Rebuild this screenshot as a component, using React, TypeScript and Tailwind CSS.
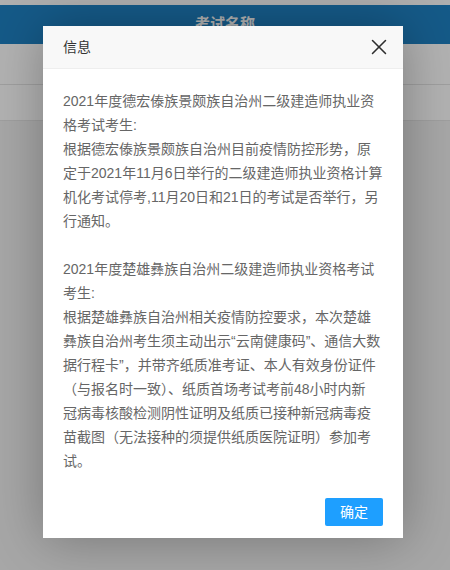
import { X } from "lucide-react";

const font = {
  fontFamily: '"Liberation Sans", "Noto Sans CJK SC", sans-serif',
};

// line breaks follow the original dialog (its font wraps a little differently)
const notices: string[][] = [
  [
    "2021年度德宏傣族景颇族自治州二级建造师执业资",
    "格考试考生:",
    "根据德宏傣族景颇族自治州目前疫情防控形势，原",
    "定于2021年11月6日举行的二级建造师执业资格计算",
    "机化考试停考,11月20日和21日的考试是否举行，另",
    "行通知。",
  ],
  [
    "2021年度楚雄彝族自治州二级建造师执业资格考试",
    "考生:",
    "根据楚雄彝族自治州相关疫情防控要求，本次楚雄",
    "彝族自治州考生须主动出示“云南健康码”、通信大数",
    "据行程卡”，并带齐纸质准考证、本人有效身份证件",
    "（与报名时一致）、纸质首场考试考前48小时内新",
    "冠病毒核酸检测阴性证明及纸质已接种新冠病毒疫",
    "苗截图（无法接种的须提供纸质医院证明）参加考",
    "试。",
  ],
];

function Page() {
  // the exam list behind the modal
  return (
    <div className="min-h-[570px] bg-[#f0f0f0]">
      <div className="h-[5px] bg-[#fbfbfb]" />
      <div className="flex h-[39px] items-center justify-center bg-[#1f82c3] text-[15px] font-bold text-white">
        考试名称
      </div>
      <div className="h-[41px] border-b border-[#e4e4e4] bg-white" />
      <div className="h-[36px] border-b border-[#e4e4e4] bg-white" />
    </div>
  );
}

function InfoDialog() {
  return (
    <div className="absolute left-[43px] top-[26px] w-[360px] bg-white shadow-[1px_1px_50px_rgba(0,0,0,0.3)]">
      <div className="relative h-[43px] border-b border-[#eeeeee] bg-[#f8f8f8] pl-5 pr-20 text-sm leading-[42px] text-[#333]">
        信息
        <button
          type="button"
          className="absolute right-[11px] top-[8px] flex h-[26px] w-[26px] items-center justify-center text-[#2e2e2e]"
        >
          <X size={26} strokeWidth={1.4} />
        </button>
      </div>
      <div className="p-5 text-sm leading-6 text-[#666]">
        {notices.map((lines, i) => (
          <div key={i}>
            {i > 0 && <br />}
            {lines.map((l) => (
              <div key={l} className="whitespace-nowrap">
                {l}
              </div>
            ))}
          </div>
        ))}
      </div>
      <div className="flex justify-end px-[15px] pb-3">
        <button
          type="button"
          className="mx-[5px] mt-[5px] h-7 rounded-[2px] bg-[#1e9fff] px-[15px] text-sm leading-7 text-white"
        >
          确定
        </button>
      </div>
    </div>
  );
}

export default function App() {
  return (
    <div className="relative h-[570px] w-[450px] overflow-hidden" style={font}>
      <Page />
      <div className="absolute inset-0 bg-black/30" />
      <InfoDialog />
    </div>
  );
}
